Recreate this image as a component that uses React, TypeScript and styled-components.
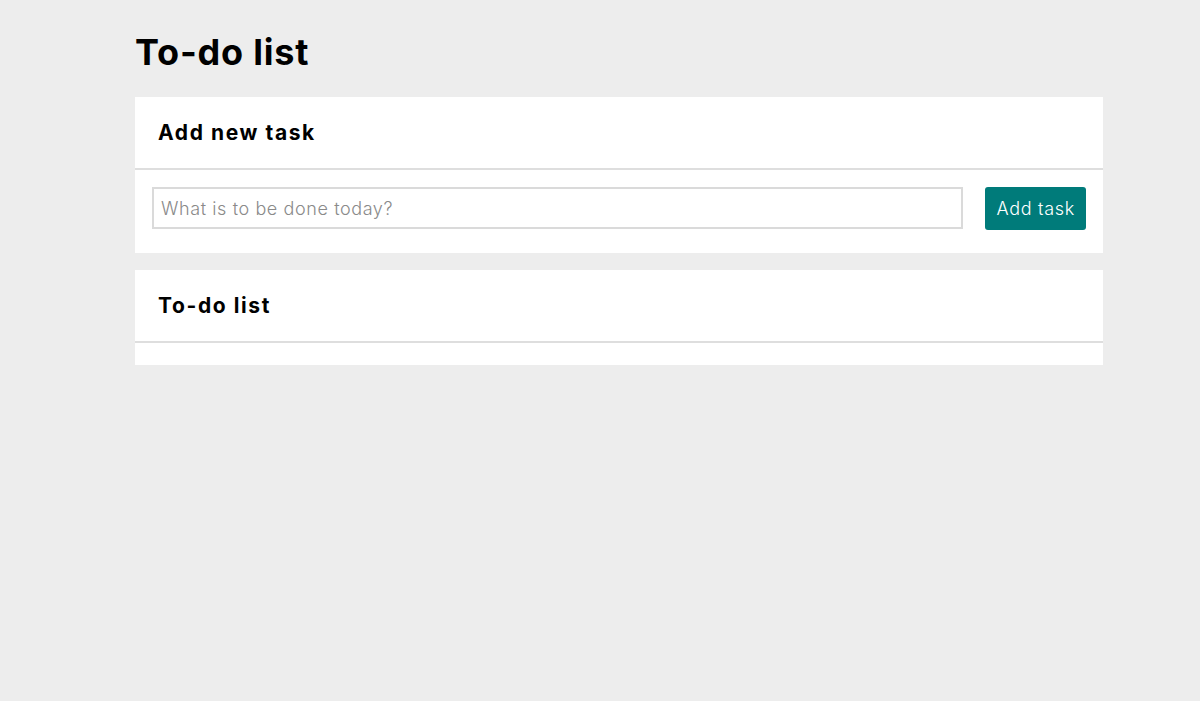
import React from 'react';
import styled, { createGlobalStyle } from 'styled-components';

const GlobalStyle = createGlobalStyle`
  html, body {
    margin: 0;
    padding: 0;
    background-color: #ededed;
    font-family: Inter, 'Open Sans', sans-serif;
    color: #000;
  }
`;

const Page = styled.div`
  min-height: 701px;
  padding: 31px 97px 0 135px;
  box-sizing: border-box;
`;

const Title = styled.h1`
  margin: 0 0 23px 0;
  font-size: 36px;
  line-height: 43px;
  font-weight: 700;
  letter-spacing: 0.8px;
`;

const Card = styled.section`
  background-color: #fff;
  margin-bottom: 17px;
`;

const CardHeader = styled.div`
  height: 71px;
  display: flex;
  align-items: center;
  padding: 0 23px;
  border-bottom: 2px solid #dedede;
`;

const CardTitle = styled.h2`
  margin: 0;
  font-size: 21px;
  font-weight: 700;
  letter-spacing: 1.6px;
`;

const CardBody = styled.div<{ $empty?: boolean }>`
  display: flex;
  align-items: flex-start;
  gap: 22px;
  padding: ${({ $empty }) => ($empty ? '11px 17px' : '17px 17px 23px 17px')};
`;

const TaskInput = styled.input`
  flex: 1;
  height: 42px;
  box-sizing: border-box;
  border: 2px solid #dadada;
  padding: 0 7px;
  font-family: inherit;
  font-size: 18px;
  font-weight: 300;
  letter-spacing: 0.6px;
  outline: none;

  &::placeholder {
    color: #8a8a8a;
  }
`;

const AddButton = styled.button`
  height: 43px;
  padding: 0 11px;
  border: none;
  border-radius: 3px;
  background-color: #007b7a;
  color: #fff;
  font-family: inherit;
  font-size: 18px;
  font-weight: 300;
  letter-spacing: 0.7px;
  cursor: pointer;
`;

export default function App() {
  return (
    <>
      <GlobalStyle />
      <Page>
        <Title>To-do list</Title>
        <Card>
          <CardHeader>
            <CardTitle>Add new task</CardTitle>
          </CardHeader>
          <CardBody>
            <TaskInput placeholder="What is to be done today?" />
            <AddButton>Add task</AddButton>
          </CardBody>
        </Card>
        <Card>
          <CardHeader>
            <CardTitle>To-do list</CardTitle>
          </CardHeader>
          <CardBody $empty />
        </Card>
      </Page>
    </>
  );
}
